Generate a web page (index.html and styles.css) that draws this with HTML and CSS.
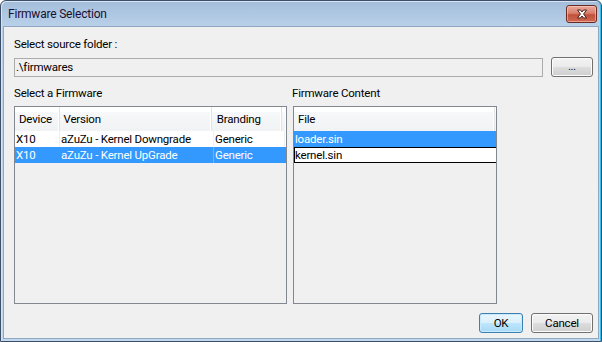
FILE: index.html
```html
<!DOCTYPE html>
<html>
<head>
<meta charset="utf-8">
<link rel="stylesheet" href="styles.css">
</head>
<body>
<div class="window">
  <div class="titlebar">
    <span class="title">Firmware Selection</span>
    <button class="close" aria-label="Close">
      <svg width="14" height="10" viewBox="0 0 14 10">
        <path d="M2.5 1 H5.5 L7 3 L8.5 1 H11.5 L8.6 5 L11.5 9 H8.5 L7 7 L5.5 9 H2.5 L5.4 5 Z" fill="#ffffff" stroke="#4a1f18" stroke-width="1" stroke-linejoin="round"/>
      </svg>
    </button>
  </div>
  <div class="client">
    <div class="label">Select source folder :</div>
    <div class="folder-row">
      <div class="input">.\firmwares</div>
      <button class="btn browse">...</button>
    </div>
    <div class="panes">
      <div class="label">Select a Firmware</div>
      <div class="label">Firmware Content</div>
      <div class="table left">
        <div class="thead">
          <div class="th c-dev">Device</div>
          <div class="th c-ver">Version</div>
          <div class="th c-brand">Branding</div>
          <div class="th c-fill"></div>
        </div>
        <div class="tr">
          <div class="td c-dev">X10</div>
          <div class="td c-ver">aZuZu - Kernel Downgrade</div>
          <div class="td c-brand">Generic</div>
        </div>
        <div class="tr sel">
          <div class="td c-dev focus">X10</div>
          <div class="td c-ver">aZuZu - Kernel UpGrade</div>
          <div class="td c-brand">Generic</div>
        </div>
      </div>
      <div class="table right">
        <div class="thead">
          <div class="th c-file">File</div>
        </div>
        <div class="tr sel">
          <div class="td c-file">loader.sin</div>
        </div>
        <div class="tr focusrow">
          <div class="td c-file">kernel.sin</div>
        </div>
      </div>
    </div>
    <div class="actions">
      <button class="btn ok">OK</button>
      <button class="btn">Cancel</button>
    </div>
  </div>
</div>
</body>
</html>
```

FILE: styles.css
```css
* { box-sizing: border-box; }
html, body { margin: 0; padding: 0; }
body {
  width: 602px;
  height: 342px;
  overflow: hidden;
  background: #ffffff;
  font-family: Roboto, "Noto Sans", "DejaVu Sans", sans-serif;
  font-size: 11.5px;
  letter-spacing: -0.2px;
  color: #000;
}
.window {
  width: 602px;
  height: 342px;
  border: 1px solid #3d5068;
  border-radius: 6px 6px 0 0;
  background: linear-gradient(to bottom, #a3bdda 0px, #b9d0e9 25px, #c1d7ee 100%);
  display: flex;
  flex-direction: column;
  box-shadow: inset 1px 1px 0 #d6e4f3, inset -1px 0 0 #36c0ea;
}
.titlebar {
  height: 25px;
  flex: none;
  display: flex;
  align-items: flex-start;
  justify-content: space-between;
  padding: 4px 4px 0 7px;
}
.title {
  line-height: 18px;
  color: #1b1030;
  font-size: 12px;
}
.close {
  width: 31px;
  height: 18px;
  padding: 0;
  margin: 0;
  border: 1px solid #6d2a21;
  border-radius: 3px;
  background: linear-gradient(to bottom, #e9a99b 0%, #d8806d 45%, #c2503b 55%, #cf6a52 100%);
  box-shadow: inset 0 0 0 1px rgba(255, 220, 210, 0.5);
  display: flex;
  align-items: center;
  justify-content: center;
}
.client {
  flex: 1;
  margin: 0 2px 2px 2px;
  background: #f0f0f0;
  border: 1px solid #91a8c2;
  padding: 9px 5px 0 10px;
  display: flex;
  flex-direction: column;
}
.label {
  line-height: 16px;
  height: 16px;
  white-space: nowrap;
}
.folder-row {
  display: flex;
  gap: 8px;
  margin-top: 5px;
  align-items: flex-start;
}
.input {
  flex: 1;
  height: 19px;
  margin-top: 1px;
  border: 1px solid #acacac;
  background: #f0f0f0;
  line-height: 17px;
  padding-left: 1px;
}
.btn {
  font-family: inherit;
  font-size: 11.5px;
  letter-spacing: -0.2px;
  color: #000;
  height: 20px;
  padding: 0;
  border: 1px solid #707070;
  border-radius: 3px;
  background: linear-gradient(to bottom, #f2f2f2 0%, #ebebeb 50%, #dddddd 51%, #cfcfcf 100%);
  box-shadow: inset 0 0 0 1px #fcfcfc;
  line-height: 18px;
}
.browse {
  width: 42px;
  flex: none;
  font-size: 10px;
}
.panes {
  display: grid;
  grid-template-columns: 273px 204px;
  column-gap: 5px;
  margin-top: 8px;
}
.table {
  margin-top: 5px;
  height: 198px;
  border: 1px solid #828790;
  background: #f0f0f0;
  overflow: hidden;
}
.table.right { margin-left: 1px; width: 204px; }
.thead {
  display: flex;
  height: 24px;
  background: linear-gradient(to bottom, #ffffff 0%, #ffffff 20%, #f7f8f9 21%, #f1f2f4 100%);
}
.th {
  height: 24px;
  line-height: 25px;
  padding-left: 4px;
  border-right: 1px solid #e1e3e7;
  box-shadow: inset -1px 0 0 #ffffff;
  white-space: nowrap;
}
.th.c-fill { flex: 1; border-right: none; }
.tr {
  display: flex;
  height: 16px;
  background: #ffffff;
}
.td {
  line-height: 16px;
  height: 16px;
  padding-left: 1px;
  white-space: nowrap;
  border-right: 1px solid #f0f0f0;
}
.left .tr { width: 271px; }
.c-dev { width: 45px; }
.c-ver { width: 154px; }
.c-brand { width: 71px; }
.th.c-brand { padding-left: 5px; }
.c-file { width: 202px; border-right: none; }
.th.c-file { padding-left: 4px; border-right: 1px solid #e1e3e7; width: 201px; }
.tr.sel { background: #3399ff; color: #ffffff; }
.tr.sel .td { border-right-color: #3399ff; }
.tr.sel .td.c-ver { border-right-color: #6fb2f7; }
.td.focus { outline: 1px dotted #c07a3a; outline-offset: -1px; }
.tr.focusrow { border: 1px solid #000000; width: 203px; }
.tr.focusrow .td { line-height: 14px; height: 14px; padding-left: 0; }
.actions {
  display: flex;
  justify-content: flex-end;
  gap: 8px;
  margin-top: 9px;
}
.actions .btn { width: 62px; }
.actions .btn.ok {
  width: 44px;
  border-color: #3c7fb1;
  background: linear-gradient(to bottom, #eaf6fd 0%, #d9f0fc 50%, #bee6fd 51%, #a7d9f5 100%);
  box-shadow: inset 0 0 0 1px #c7eafc;
}
```
